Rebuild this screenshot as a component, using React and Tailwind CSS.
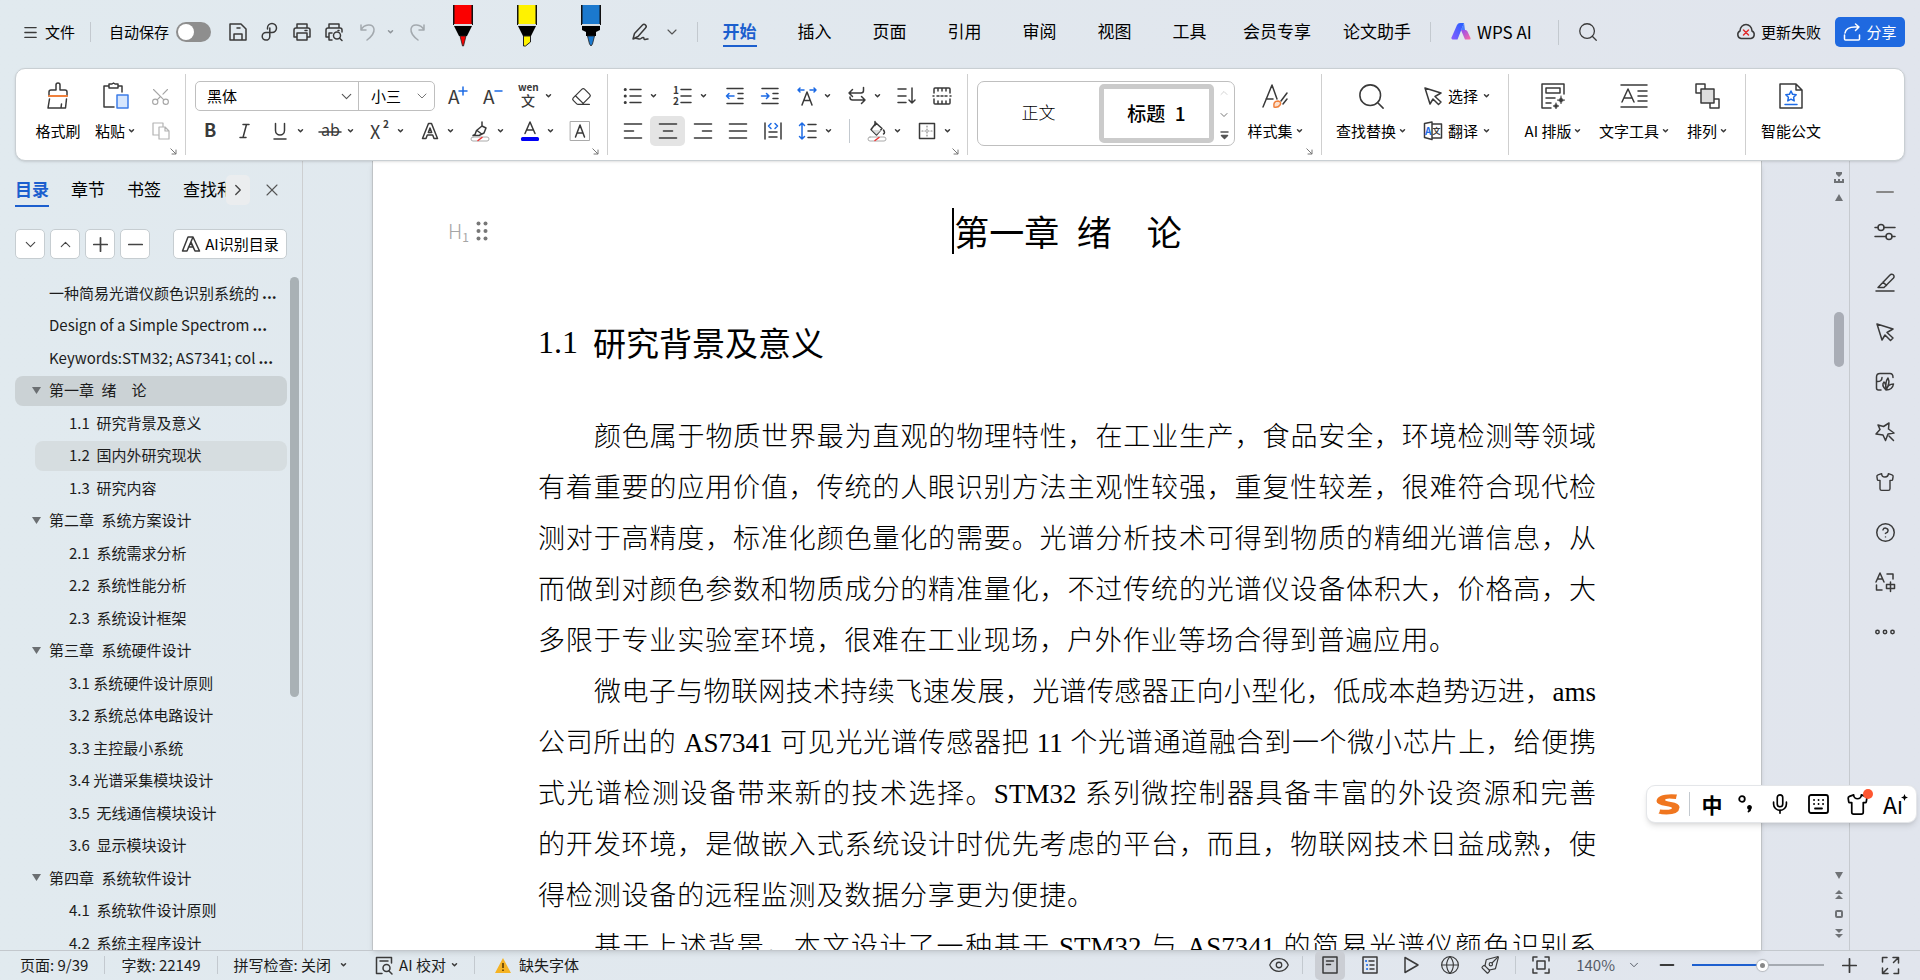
import {
  Menu, X, Plus, Minus, Search, ChevronDown, ChevronUp, ChevronRight, Eye, Globe, Play,
  Mic, Shirt, CircleHelp, Scissors, Eraser, PenTool,
} from "lucide-react";

const UI_FONT = "font-['Noto_Sans_CJK_SC','Noto_Sans',sans-serif]";

/* ---------- small helpers ---------- */

function Svg({ w = 20, h = 20, sw = 1.5, className = "text-[#3a3a3a]", children }) {
  return (
    <svg
      width={w}
      height={h}
      viewBox={`0 0 ${w} ${h}`}
      fill="none"
      stroke="currentColor"
      strokeWidth={sw}
      strokeLinecap="round"
      strokeLinejoin="round"
      className={`shrink-0 overflow-visible ${className}`}
      aria-hidden="true"
    >
      {children}
    </svg>
  );
}

const Caret = ({ className = "text-[#3a3a3a]" }) => (
  <Svg w={7} h={6} sw={1.5} className={className}>
    <path d="M1.500 1.800l2 2 2-2" />
  </Svg>
);

const Launcher = () => (
  <button aria-label="更多设置" className="absolute right-[8px] bottom-0">
    <Svg w={7} h={7} sw={1} className="text-[#777]">
      <path d="M.8.8l5 5M6 2v4H2" />
    </Svg>
  </button>
);

const Divider = ({ className = "h-5" }) => <span className={`w-px shrink-0 bg-[#c3c9cf] ${className}`} />;

/* ---------- icons ---------- */

const SaveIcon = () => (
  <Svg><path d="M2 2h11l5 5v11H2zM6 18v-6h8v6M9 6h3" /></Svg>
);
const ClipIcon = () => (
  <Svg><path d="M7.500 7V6a4.500 4.500 0 1 1 4.500 4.500H6a3.800 3.800 0 1 0 3.800 4V6" /></Svg>
);
const PrintIcon = () => (
  <Svg><path d="M5 6V2h10v4M5 15H2V8a2 2 0 0 1 2-2h12a2 2 0 0 1 2 2v7h-3M5 11h10v7H5zM13 8.500h2" /></Svg>
);
const PreviewIcon = () => (
  <Svg><path d="M5 6V2h10v4M5 15H2V8a2 2 0 0 1 2-2h12a2 2 0 0 1 2 2v2M8 18H5v-7h3" /><circle cx="13" cy="13.500" r="3.500" /><path d="M15.600 16.200l2.400 2.300M14 8.500h1" /></Svg>
);
const UndoIcon = () => (
  <Svg className="text-[#a3a9ae]"><path d="M3 3v5h5M3 8c3-6 12-7 13-1 .5 4-3 8-7 11" /></Svg>
);
const RedoIcon = () => (
  <Svg className="text-[#a3a9ae]"><path d="M17 3v5h-5M17 8C14 2 5 1 4 7c-.5 4 3 8 7 11" /></Svg>
);
const DrawPenIcon = () => (
  <Svg><path d="M3 17l1.500-5.500L12.500 3a2 2 0 0 1 3 3L8 14.500zM3 17c4-2 6 1 8-.5s3-1 3 .3 2 .7 4 .2" /></Svg>
);

function Marker({ color, tip }) {
  return (
    <svg width="20" height="42" viewBox="0 0 20 42" aria-hidden="true">
      <path d="M0 0h20v20H0z" fill="#111" />
      <path d="M1.500 0h17v19h-17z" fill={color} />
      <path d="M1 19h18v2H1z" fill="#d8dde0" />
      <path d={tip === "round" ? "M1 21h18v4l-4 2v4H5v-4l-4-2z" : "M1 21h18l-5 10H6z"} fill="#000" />
      {tip === "flat" && <path d="M6.500 31h7v6l-5 4h-2z" fill={color} stroke="#222" />}
      {tip === "fine" && <path d="M7 31h6l-2.500 10h-1z" fill={color} stroke="#222" strokeWidth=".8" />}
      {tip === "round" && <path d="M6.500 31h7l-2 8-1.500 2-1.500-2z" fill={color} stroke="#222" strokeWidth=".8" />}
    </svg>
  );
}

const WpsAiLogo = () => (
  <svg width="20" height="18" viewBox="0 0 20 18" aria-hidden="true">
    <defs>
      <linearGradient id="wa" x1="0" y1="1" x2="1" y2="0">
        <stop offset="0" stopColor="#8a5cff" />
        <stop offset="1" stopColor="#2060ff" />
      </linearGradient>
      <linearGradient id="wb" x1="0" y1="0" x2="1" y2="1">
        <stop offset="0" stopColor="#8c4cf5" />
        <stop offset="1" stopColor="#ff6aa0" />
      </linearGradient>
    </defs>
    <path d="M9 0h4L6.500 16.500H1.500q-1.500-.5-1-2L6 2Q7 0 9 0z" fill="url(#wa)" />
    <path d="M10 7h4.500q1.500 0 2 1.500l3 6.500q.5 1.500-1 1.500H14z" fill="url(#wb)" />
    <path d="M13 0l1 7h-4z" fill="#4a7dff" />
  </svg>
);

const BrushIcon = () => (
  <Svg w={26} h={28}>
    <path d="M11 8V3a2 2 0 0 1 4 0v5h5a2 2 0 0 1 2 2v4H4v-4a2 2 0 0 1 2-2zM4.500 17L3 26h17.500l1-9M16 26l.500-4" />
    <path d="M4 14h18" stroke="#f0803c" strokeWidth="2" />
  </Svg>
);
const PasteIcon = () => (
  <Svg w={27} h={28}>
    <path d="M7 4H2v21h10M16 4h4v6M7 2h3l1.500-1 1.500 1h3v4H7z" />
    <path d="M15 13h11v13H15z" fill="#d6e6fd" stroke="#3d7ce8" />
  </Svg>
);
const CopyIcon = () => (
  <Svg w={18} h={18} sw={1.2} className="text-[#b3b3b3]"><path d="M11 4V1H1v12h5M7 5h6l4 4v8H7zM13 5v4h4" /></Svg>
);

/* letter with extra strokes around it */
function LetterIcon({ letter = "A", size = 19, x = 2, y = 17, weight = 400, children }) {
  return (
    <Svg w={22} h={22}>
      <text
        x={x}
        y={y}
        fontSize={size}
        fontWeight={weight}
        fontFamily="Noto Sans CJK SC, sans-serif"
        fill="currentColor"
        stroke="none"
      >
        {letter}
      </text>
      {children}
    </Svg>
  );
}

const BulletIcon = () => (
  <Svg><path d="M7 3.500h11M7 10h11M7 16.500h11" /><path d="M2.200 3.500h.1M2.200 10h.1M2.200 16.500h.1" strokeWidth="3" /></Svg>
);
const NumberIcon = () => (
  <Svg>
    <path d="M8 3.500h10M8 10h10M8 16.500h10" />
    <text x="0" y="8" fontSize="10" fontWeight="700" fill="currentColor" stroke="none">1</text>
    <text x="0" y="19" fontSize="10" fontWeight="700" fill="currentColor" stroke="none">2</text>
  </Svg>
);
const OutdentIcon = () => (
  <Svg><path d="M2 2.500h16M13 7.500h5M13 12.500h5M2 17.500h16" /><path d="M9 10H1.500M4 7.500L1.500 10 4 12.500" stroke="#1d6be5" /></Svg>
);
const IndentIcon = () => (
  <Svg><path d="M2 2.500h16M13 7.500h5M13 12.500h5M2 17.500h16" /><path d="M1.500 10H9M6.500 7.500L9 10l-2.500 2.500" stroke="#1d6be5" /></Svg>
);
const CharScaleIcon = () => (
  <Svg>
    <path d="M1 4h6M3 2L1 4l2 2M19 4h-6M17 2l2 2-2 2" stroke="#1d6be5" />
    <path d="M5 19l5-13 5 13M7 14.500h6" />
  </Svg>
);
const WrapIcon = () => (
  <Svg><path d="M16.500 1.500v3q0 2.500-2.500 2.500H2M5.500 3.500L2 7l3.500 3.500M3 11v.5q0 2.500 2.500 2.500H18M14.500 10.500L18 14l-3.500 3.500" /></Svg>
);
const SortIcon = () => (
  <Svg><path d="M1 3h8M1 10h8M1 16.500h8M15 2v15M12 14l3 3 3-3" /></Svg>
);
const RulerIcon = () => (
  <Svg><path d="M2 7V3q0-1 1-1h14q1 0 1 1v4M2 13v4q0 1 1 1h14q1 0 1-1v-4M6 2v3M10 2v3M14 2v3M6 18v-3M10 18v-3M14 18v-3M1 10h1M5 10h2M9 10h2M13 10h2M18 10h1" /></Svg>
);
const AlignIcon = ({ mid }) => (
  <Svg sw={1.6}><path d={`M1.500 3h17M${mid}M1.500 17h17`} /></Svg>
);
const DistributeIcon = () => (
  <Svg><path d="M2 2v16M18 2v16M6 11h8M6 16h8" /><path d="M8 2.500L5.500 5 8 7.500M12 2.500L14.500 5 12 7.500" stroke="#1d6be5" /></Svg>
);
const LineSpaceIcon = () => (
  <Svg><path d="M10 3.500h8M10 10h8M10 16.500h8" /><path d="M4 2v16M1.500 4.500L4 2l2.500 2.500M1.500 15.500L4 18l2.500-2.500" stroke="#1d6be5" /></Svg>
);
const BucketIcon = () => (
  <Svg>
    <path d="M9 2l6 5.500-5.500 6.500L4 8.500zM8 .5v4M16.500 9q2 3 0 4" />
    <path d="M5 9h9l-4.500 4.500z" fill="#dcdcdc" stroke="none" />
    <rect x="1" y="16" width="18" height="4" rx="2" stroke="#aaa" strokeWidth="1" />
    <path d="M8 19.500l4-3" stroke="#e33" />
  </Svg>
);
const BorderIcon = () => (
  <Svg><path d="M2.500 2.500h15v15h-15z" /><path d="M10 5v10M5 10h10" strokeDasharray="1 2" strokeWidth="1.200" className="text-[#888]" /></Svg>
);
const StyleSetIcon = () => (
  <Svg w={28} h={26}>
    <path d="M2 24L11 2l5 14M5 16h7M26 10l-6 8M26 16l-4 5" />
    <path d="M13 24q-1-6 4-6 4 1 2 4-2 3-6 2z" stroke="#f0803c" fill="#fbe0cd" />
  </Svg>
);
const CursorIcon = () => (
  <Svg><path d="M2 2l16 5-6 3.500 6 5.500-2.500 2.500L10 13l-3 5z" /></Svg>
);
const TranslateIcon = () => (
  <Svg>
    <path d="M9 1L1.500 2.500v14L9 18.500zM9 3h9.500v14H9" />
    <text x="2" y="14" fontSize="10" fontWeight="700" fill="#1d6be5" stroke="none">A</text>
    <text x="9.500" y="13" fontSize="8" fontWeight="700" fill="currentColor" stroke="none" fontFamily="Noto Sans CJK SC">文</text>
  </Svg>
);
const AiLayoutIcon = () => (
  <Svg w={26} h={28}>
    <path d="M24 12V2H2v24h9M6 6h14v5H6zM6 16h9M6 21h5" />
    <path d="M21 14q.5 4 4 4-3.500.5-4 4-.5-3.500-4-4 3.500 0 4-4zM16 21q.5 2.500 3 3-2.500.5-3 3-.5-2.500-3-3 2.500-.5 3-3z" fill="currentColor" strokeWidth=".5" />
  </Svg>
);
const TextToolIcon = () => (
  <Svg w={28} h={26}><path d="M1 2h26M1 24h26M18 8h9M18 13h9M18 18h9M2 19L8 6l6 13M4.500 15h7" /></Svg>
);
const ArrangeIcon = () => (
  <Svg w={26} h={26}><path d="M2 1h9v9H2zM16 16h9v9h-9z" /><path d="M7 6h13v14H7z" fill="#dedede" /></Svg>
);
const SmartDocIcon = () => (
  <Svg w={26} h={28}>
    <path d="M2 2h16l6 6v18H2zM18 2v6h6" />
    <path d="M13 9l1.600 3.300 3.600.5-2.600 2.500.6 3.600-3.200-1.700-3.200 1.700.6-3.600-2.600-2.500 3.600-.5zM7 22.500h12" stroke="#1d6be5" />
  </Svg>
);
const AiTocIcon = () => (
  <Svg w={20} h={18}><path d="M7 2h5l-6 14H1.500zM12 2l6.500 14H14l-4-8M7.500 12h4M10 7l4 9" /></Svg>
);

/* ---------- top bar ---------- */

const TABS = ["开始", "插入", "页面", "引用", "审阅", "视图", "工具", "会员专享", "论文助手"];

function IconButton({ label, className = "", children }) {
  return (
    <button aria-label={label} className={`flex shrink-0 items-center justify-center ${className}`}>
      {children}
    </button>
  );
}

function TopBar() {
  return (
    <header className="flex h-[68px] shrink-0 items-start justify-between pr-[15px] pl-[22px]">
      <div className="flex h-[64px] items-center">
        <button className="flex items-center gap-[6px] text-[15px]">
          <Menu size={17} strokeWidth={1.8} className="text-[#3a3a3a]" />文件
        </button>
        <Divider className="ml-[15px] h-5" />
        <label className="ml-[18px] flex items-center gap-[7px] text-[15px]">
          自动保存
          <input
            type="checkbox"
            className="flex h-5 w-[35px] appearance-none items-center rounded-full bg-[#8e8e8e] px-[2px] before:size-4 before:rounded-full before:bg-white"
          />
        </label>
        <div className="ml-[11px] flex items-center">
          <IconButton label="保存" className="w-8"><SaveIcon /></IconButton>
          <IconButton label="输出" className="w-8"><ClipIcon /></IconButton>
          <IconButton label="打印" className="w-8"><PrintIcon /></IconButton>
          <IconButton label="打印预览" className="w-8"><PreviewIcon /></IconButton>
          <IconButton label="撤销" className="ml-[2px] w-8"><UndoIcon /></IconButton>
          <IconButton label="撤销记录" className="w-3"><Caret className="text-[#8e9499]" /></IconButton>
          <IconButton label="恢复" className="ml-px w-10"><RedoIcon /></IconButton>
        </div>
        <div className="ml-4 flex items-center gap-11 pb-3">
          <IconButton label="红色笔"><Marker color="#fb0000" tip="fine" /></IconButton>
          <IconButton label="黄色荧光笔"><Marker color="#fff200" tip="flat" /></IconButton>
          <IconButton label="蓝色笔"><Marker color="#1b79ce" tip="round" /></IconButton>
        </div>
        <IconButton label="画笔" className="ml-[29px]"><DrawPenIcon /></IconButton>
        <IconButton label="更多画笔" className="ml-[14px]"><ChevronDown size={16} strokeWidth={1.7} className="text-[#555]" /></IconButton>
        <Divider className="ml-[17px] h-5" />
        <nav className="ml-1 flex items-center text-[17px]">
          {TABS.map((tab, i) => (
            <a
              key={tab}
              href="#"
              className={`flex flex-col items-center leading-[28px] ${tab.length > 2 ? "w-[100px]" : "w-[75px]"} ${i === 0 ? "font-bold text-[#1c5fce]" : ""}`}
            >
              <span className={`border-b-2 ${i === 0 ? "border-[#1c5fce]" : "border-transparent"}`}>{tab}</span>
            </a>
          ))}
        </nav>
        <Divider className="ml-[3px] h-5" />
        <button className="ml-[20px] flex items-center gap-[6px] text-[17px]"><WpsAiLogo />WPS AI</button>
        <Divider className="ml-[26px] h-[25px]" />
        <IconButton label="搜索" className="ml-[18px]"><Search size={22} strokeWidth={1.4} className="text-[#3a3a3a]" /></IconButton>
      </div>
      <div className="flex h-[64px] items-center gap-[14px] text-[15px]">
        <button className="flex items-center gap-[5px]">
          <Svg><path d="M5 16.500a4 4 0 0 1-1-7.500C4 5 7 2.500 10 2.500S16 5 16 9a4 4 0 0 1-1 7.500z" /><path d="M7.500 8l5 5M12.500 8l-5 5" stroke="#e02c2c" /></Svg>
          更新失败
        </button>
        <button className="flex h-[30px] w-[70px] items-center justify-center gap-[5px] rounded-[5px] bg-[#1f69e0] text-white">
          <Svg w={18} h={18} className="text-white"><path d="M2 10q1-6 10-6h4M12.500 1L16 4l-3.500 3.500M1.500 12v4q0 1 1 1h13q1 0 1-1v-4" /></Svg>
          分享
        </button>
      </div>
    </header>
  );
}

/* ---------- ribbon ---------- */

function Tool({ label, menu, active, className = "", children }) {
  return (
    <button aria-label={label} title={label} className={`flex h-[30px] shrink-0 items-center ${menu ? "w-[50px]" : "w-[35px]"} ${className}`}>
      <span className={`flex h-[30px] w-[35px] items-center justify-center ${active ? "rounded-[5px] bg-[#e4e4e4]" : ""}`}>{children}</span>
      {menu && <Caret />}
    </button>
  );
}

function BigTool({ label, menu, className, children }) {
  return (
    <button className={`flex shrink-0 flex-col items-center gap-[5px] text-[15px] ${className}`}>
      <span className="flex h-[30px] items-center">{children}</span>
      <span className="flex h-[30px] items-center gap-[3px] whitespace-nowrap">{label}{menu && <Caret />}</span>
    </button>
  );
}

function Group({ last, className = "", children }) {
  return <section className={`relative flex shrink-0 pt-[7px] ${last ? "" : "border-r border-[#cfcfcf]"} ${className}`}>{children}</section>;
}

function Ribbon() {
  return (
    <div className="relative z-10 mx-[15px] flex h-[93px] shrink-0 overflow-hidden rounded-[10px] border border-[#c9cfd3] bg-white py-[5px] pl-[13px] shadow-sm">
      <Group className="w-[157px]">
        <BigTool label="格式刷" className="w-[58px]"><BrushIcon /></BigTool>
        <BigTool label="粘贴" menu className="w-[56px]"><PasteIcon /></BigTool>
        <div className="flex flex-col gap-[5px]">
          <Tool label="剪切"><Scissors size={21} strokeWidth={1.3} className="-rotate-90 text-[#a6a6a6]" /></Tool>
          <Tool label="复制"><CopyIcon /></Tool>
        </div>
        <Launcher />
      </Group>

      <Group className="w-[422px] flex-col gap-[5px] pl-[6px]">
        <div className="flex pl-[3px]">
          <div className="mr-[5px] flex h-[30px] w-[240px] rounded-[5px] border border-[#bfbfbf] text-[15px]">
            <div className="relative w-[163px] border-r border-[#bfbfbf]">
              <select aria-label="字体" className="h-full w-full appearance-none pl-[11px]"><option>黑体</option></select>
              <ChevronDown size={17} strokeWidth={1.6} className="pointer-events-none absolute top-[6px] right-[3px] text-[#555]" />
            </div>
            <div className="relative flex-1">
              <select aria-label="字号" className="h-full w-full appearance-none pl-[12px]"><option>小三</option></select>
              <ChevronDown size={16} strokeWidth={1.5} className="pointer-events-none absolute top-[6px] right-[4px] text-[#777]" />
            </div>
          </div>
          <Tool label="增大字号"><LetterIcon x={1} y={19}><path d="M16 2v8M12 6h8" stroke="#1d6be5" /></LetterIcon></Tool>
          <Tool label="减小字号"><LetterIcon x={1} y={19}><path d="M13 6h7" stroke="#1d6be5" /></LetterIcon></Tool>
          <Tool label="拼音指南" menu>
            <Svg w={22} h={26}>
              <text x="1" y="8" fontSize="10" fontWeight="700" fill="currentColor" stroke="none">wen</text>
              <text x="4" y="23" fontSize="14" fontWeight="500" fill="currentColor" stroke="none" fontFamily="Noto Sans CJK SC">文</text>
            </Svg>
          </Tool>
          <Tool label="清除格式" className="ml-1"><Eraser size={21} strokeWidth={1.4} className="text-[#3a3a3a]" /></Tool>
        </div>
        <div className="flex">
          <Tool label="加粗"><LetterIcon letter="B" x={5} y={17} size={18} weight={700} /></Tool>
          <Tool label="倾斜"><Svg><path d="M8 3.500h6M5 16.500h6M11.500 3.500l-3.500 13" /></Svg></Tool>
          <Tool label="下划线" menu><Svg><path d="M5.500 2.500v7a4.500 4.500 0 0 0 9 0v-7M4 18h12" /></Svg></Tool>
          <Tool label="删除线" menu><LetterIcon letter="ab" x={2} y={16} size={16}><path d="M0 12h22" /></LetterIcon></Tool>
          <Tool label="上标" menu><LetterIcon letter="X" x={1} y={19} size={18}><text x="14" y="8" fontSize="10" fontWeight="700" fill="currentColor" stroke="none">2</text></LetterIcon></Tool>
          <Tool label="文字效果" menu><Svg><path d="M8.500 2.500h3l6 15h-3.500l-1.300-3.500H7.300L6 17.500H2.500zM10 7l-1.700 4.500h3.400z" /></Svg></Tool>
          <Tool label="突出显示" menu>
            <Svg><path d="M12 1v4l4 2M12 5L6.500 9.500 5 13.500 3 14.500h6l5-2.500 2-5M7 9.500l4 3" /><rect x="1" y="16" width="18" height="4" rx="2" stroke="#aaa" strokeWidth="1" /><path d="M8 19.500l4-3" stroke="#e33" /></Svg>
          </Tool>
          <Tool label="字体颜色" menu>
            <Svg><path d="M5 12.500l5-11.500 5 11.500M7 9h6" /><rect x="1" y="16" width="18" height="4" rx="1.500" fill="#0000f5" stroke="none" /></Svg>
          </Tool>
          <Tool label="字符底纹" className="w-10!">
            <Svg><rect x=".5" y=".5" width="19" height="19" stroke="#aaa" strokeWidth="1" /><path d="M5.500 16L10 4l4.500 12M7.500 12h5" /></Svg>
          </Tool>
        </div>
        <Launcher />
      </Group>

      <Group className="w-[360px] flex-col gap-[5px] pl-[7px]">
        <div className="flex gap-[2px]">
          <div className="flex">
            <Tool label="项目符号" menu><BulletIcon /></Tool>
            <Tool label="编号" menu><NumberIcon /></Tool>
          </div>
          <div className="flex">
            <Tool label="减少缩进"><OutdentIcon /></Tool>
            <Tool label="增加缩进"><IndentIcon /></Tool>
          </div>
          <div className="flex">
            <Tool label="中文版式" menu><CharScaleIcon /></Tool>
            <Tool label="换行" menu><WrapIcon /></Tool>
            <Tool label="排序"><SortIcon /></Tool>
            <Tool label="制表位"><RulerIcon /></Tool>
          </div>
        </div>
        <div className="flex items-center">
          <Tool label="左对齐"><AlignIcon mid="1.5 10h9" /></Tool>
          <Tool label="居中" active><AlignIcon mid="5.5 10h9" /></Tool>
          <Tool label="右对齐"><AlignIcon mid="9.5 10h9" /></Tool>
          <Tool label="两端对齐"><AlignIcon mid="1.5 10h17" /></Tool>
          <Tool label="分散对齐"><DistributeIcon /></Tool>
          <Tool label="行距" menu><LineSpaceIcon /></Tool>
          <Divider className="mx-[9px] h-6" />
          <Tool label="底纹颜色" menu><BucketIcon /></Tool>
          <Tool label="边框" menu><BorderIcon /></Tool>
        </div>
        <Launcher />
      </Group>

      <Group className="w-[354px] pl-[9px]">
        <div className="flex h-[65px] w-[258px] items-center rounded-[7px] border border-[#bfbfbf]">
          <button className="w-[121px] font-['Liberation_Serif','Noto_Sans_CJK_SC',serif] text-[17px] font-light">正文</button>
          <button className="h-[59px] w-[115px] rounded-[5px] border-[5px] border-[#cbcbcb] text-[19px] font-medium whitespace-pre">标题&ensp;1</button>
          <div className="flex flex-1 flex-col items-center gap-[10px]">
            <ChevronUp size={12} strokeWidth={1.5} className="text-[#c4c4c4]" />
            <ChevronDown size={12} strokeWidth={1.8} className="text-[#666]" />
            <Svg w={9} h={9} className="text-[#555]"><path d="M1 1h7M1.500 4.500h6l-3 3z" fill="currentColor" /></Svg>
          </div>
        </div>
        <BigTool label="样式集" menu className="ml-[4px] w-[72px]"><StyleSetIcon /></BigTool>
        <Launcher />
      </Group>

      <Group className="w-[187px] pl-[9px]">
        <BigTool label="查找替换" menu className="w-[80px]"><Search size={31} strokeWidth={1.2} className="text-[#3a3a3a]" /></BigTool>
        <div className="ml-[12px] flex flex-col gap-[5px] text-[15px]">
          <button className="flex h-[30px] items-center gap-[5px]"><CursorIcon />选择<Caret /></button>
          <button className="flex h-[30px] items-center gap-[5px]"><TranslateIcon />翻译<Caret /></button>
        </div>
      </Group>

      <Group className="w-[237px] pl-[7px]">
        <BigTool label="AI 排版" menu className="w-[74px]"><AiLayoutIcon /></BigTool>
        <BigTool label="文字工具" menu className="w-[88px]"><TextToolIcon /></BigTool>
        <BigTool label="排列" menu className="w-[58px]"><ArrangeIcon /></BigTool>
      </Group>

      <Group last className="pl-[5px]">
        <BigTool label="智能公文" className="w-[80px]"><SmartDocIcon /></BigTool>
      </Group>
    </div>
  );
}

/* ---------- outline panel ---------- */

const OUTLINE = [
  { text: "一种简易光谱仪颜色识别系统的", more: true },
  { text: "Design of a Simple Spectrom", more: true },
  { text: "Keywords:STM32; AS7341; col", more: true },
  { text: "第一章\u2002绪\u3000论", open: true, current: true },
  { text: "1.1  研究背景及意义", sub: true },
  { text: "1.2  国内外研究现状", sub: true, hover: true },
  { text: "1.3  研究内容", sub: true },
  { text: "第二章\u2002系统方案设计", open: true },
  { text: "2.1  系统需求分析", sub: true },
  { text: "2.2  系统性能分析", sub: true },
  { text: "2.3  系统设计框架", sub: true },
  { text: "第三章\u2002系统硬件设计", open: true },
  { text: "3.1 系统硬件设计原则", sub: true },
  { text: "3.2 系统总体电路设计", sub: true },
  { text: "3.3 主控最小系统", sub: true },
  { text: "3.4 光谱采集模块设计", sub: true },
  { text: "3.5  无线通信模块设计", sub: true },
  { text: "3.6  显示模块设计", sub: true },
  { text: "第四章\u2002系统软件设计", open: true },
  { text: "4.1  系统软件设计原则", sub: true },
  { text: "4.2  系统主程序设计", sub: true },
];

function OutlineRow({ item }) {
  return (
    <li className={`flex items-center ${item.sub ? "pl-5" : ""}`}>
      <a
        href="#"
        className={`flex h-[30px] w-full items-center rounded-[8px] whitespace-pre ${item.sub ? "pl-[34px]" : ""} ${item.current ? "bg-[#cbd2d5]" : ""} ${item.hover ? "bg-[#d6dde0]" : ""}`}
      >
        {!item.sub && (
          <span className="flex w-[34px] justify-center pl-[9px]">
            {item.open && <svg width="9" height="7" viewBox="0 0 9 7"><path d="M0 0h9L4.500 7z" fill="#6b6f72" /></svg>}
          </span>
        )}
        {item.text}
        {item.more && <b className="ml-[3px]">...</b>}
      </a>
    </li>
  );
}

function OutlinePanel() {
  const square = "flex size-[30px] items-center justify-center rounded-[5px] border border-[#c6cdd1] bg-white text-[#444]";
  return (
    <aside className="flex w-[303px] shrink-0 flex-col overflow-hidden border-r border-[#cdcfd1] pl-[15px]">
      <div className="mt-[12px] flex h-[34px] items-center text-[17px]">
        <div className="flex w-[211px] gap-[22px] overflow-hidden whitespace-nowrap">
          {["目录", "章节", "书签", "查找和替换"].map((t, i) => (
            <a key={t} href="#" className={`border-b-2 leading-[32px] ${i === 0 ? "border-[#1c5fce] font-bold text-[#1c5fce]" : "border-transparent"}`}>{t}</a>
          ))}
        </div>
        <button aria-label="更多标签" className="flex h-[30px] w-6 items-center justify-center rounded-[5px] bg-[#ebedef]">
          <ChevronRight size={18} strokeWidth={1.8} className="text-[#444]" />
        </button>
        <button aria-label="关闭" className="ml-3"><X size={20} strokeWidth={1.3} className="text-[#555]" /></button>
      </div>
      <div className="mt-[22px] flex gap-[5px]">
        <button aria-label="全部折叠" className={square}><ChevronDown size={17} strokeWidth={1.5} /></button>
        <button aria-label="全部展开" className={square}><ChevronUp size={17} strokeWidth={1.5} /></button>
        <button aria-label="放大级别" className={square}><Plus size={23} strokeWidth={1.8} /></button>
        <button aria-label="缩小级别" className={square}><Minus size={23} strokeWidth={1.8} /></button>
        <button className="ml-[18px] flex h-[30px] w-[114px] items-center justify-center gap-[4px] rounded-[5px] border border-[#c6cdd1] bg-white text-[15px]">
          <AiTocIcon />AI识别目录
        </button>
      </div>
      <div className="mt-[18px] flex items-start gap-[3px]">
        <ul className="grid h-[682px] w-[272px] auto-rows-fr text-[15px] text-[#1c1c1c]">
          {OUTLINE.map((item) => <OutlineRow key={item.text} item={item} />)}
        </ul>
        <div className="h-[420px] w-[9px] rounded-full bg-[#a9b1b5]" />
      </div>
    </aside>
  );
}

/* ---------- document ---------- */

/* typeset lines; "end" is the space left after a paragraph's last line */
const LINES = [
  { text: "颜色属于物质世界最为直观的物理特性，在工业生产，食品安全，环境检测等领域", first: true },
  { text: "有着重要的应用价值，传统的人眼识别方法主观性较强，重复性较差，很难符合现代检" },
  { text: "测对于高精度，标准化颜色量化的需要。光谱分析技术可得到物质的精细光谱信息，从" },
  { text: "而做到对颜色参数和物质成分的精准量化，不过传统的光谱仪设备体积大，价格高，大" },
  { text: "多限于专业实验室环境，很难在工业现场，户外作业等场合得到普遍应用。", end: "pr-[140px]" },
  { text: "微电子与物联网技术持续飞速发展，光谱传感器正向小型化，低成本趋势迈进，ams", first: true },
  { text: "公司所出的 AS7341 可见光光谱传感器把 11 个光谱通道融合到一个微小芯片上，给便携" },
  { text: "式光谱检测设备带来新的技术选择。STM32 系列微控制器具备丰富的外设资源和完善" },
  { text: "的开发环境，是做嵌入式系统设计时优先考虑的平台，而且，物联网技术日益成熟，使" },
  { text: "得检测设备的远程监测及数据分享更为便捷。", end: "pr-[502px]" },
  { text: "基于上述背景，本文设计了一种基于 STM32 与 AS7341 的简易光谱仪颜色识别系", first: true },
];

function DocumentPage() {
  return (
    <article className="ml-[69px] flex-1 overflow-hidden border-x border-[#bfc3c6] bg-white px-[165px] text-black shadow-md">
      <div className="relative mt-[44px] flex h-[52px] items-center justify-center">
        <div className="absolute -left-[90px] flex items-center gap-[7px] text-[#a5a5a5]">
          <span className="text-[20px] font-light">H<sub className="text-[12px] font-normal">1</sub></span>
          <svg width="12" height="20" viewBox="0 0 12 20" fill="#777">
            {[2.5, 10, 17.5].map((y) => [2.5, 9.5].map((x) => <circle key={`${x}-${y}`} cx={x} cy={y} r="2" />))}
          </svg>
        </div>
        <span className="h-[46px] w-[2px] bg-black" />
        <h1 className="text-[35px] leading-[48px] font-normal">第一章&ensp;绪　论</h1>
      </div>
      <h2 className="mt-[59px] flex items-center gap-[15px] text-[33px] leading-[52px] font-normal">
        <span className="font-['Liberation_Serif',serif] text-[32px]">1.1</span>研究背景及意义
      </h2>
      <div className="mt-[44px] font-['Liberation_Serif','Noto_Sans_CJK_SC',serif] text-[27px] leading-[51px] font-light">
        {LINES.map((line) => (
          <p
            key={line.text}
            className={`whitespace-nowrap text-justify [text-align-last:justify] ${line.first ? "pl-14" : ""} ${line.end || ""}`}
          >
            {line.text}
          </p>
        ))}
      </div>
    </article>
  );
}

function ScrollColumn() {
  return (
    <div className="ml-[66px] flex w-[22px] shrink-0 flex-col items-center border-r border-[#c6cacf] pt-[11px] pb-[12px] text-[#6f7276]">
      <svg width="10" height="11" viewBox="0 0 10 11" fill="currentColor"><path d="M2 0h6v2L5 5 2 2zM0 7h2v2h2V7h2v2h2V7h2v4H0z" /></svg>
      <svg width="8" height="7" viewBox="0 0 8 7" fill="currentColor" className="mt-[11px]"><path d="M4 0l4 7H0z" /></svg>
      <div className="mt-[111px] h-[55px] w-[10px] rounded-full bg-[#a9adb6]" />
      <div className="mt-auto flex flex-col items-center gap-[11px]">
        <svg width="8" height="7" viewBox="0 0 8 7" fill="currentColor"><path d="M0 0h8L4 7z" /></svg>
        <svg width="8" height="9" viewBox="0 0 8 9" fill="currentColor"><path d="M4 0l4 4H0zM4 5l4 4H0z" /></svg>
        <svg width="8" height="8" viewBox="0 0 8 8" fill="none" stroke="currentColor" strokeWidth="2"><rect x="1" y="1" width="6" height="6" rx="1" /></svg>
        <svg width="8" height="9" viewBox="0 0 8 9" fill="currentColor"><path d="M0 0h8L4 4zM0 5h8L4 9z" /></svg>
      </div>
    </div>
  );
}

function SideTools() {
  const tools = [
    ["属性", <Svg key="b"><path d="M0 5.500h3M9 5.500h11M0 14.500h11M17 14.500h3" /><circle cx="6" cy="5.500" r="3" /><circle cx="14" cy="14.500" r="3" /></Svg>],
    ["批注", <Svg key="c"><path d="M1 19h18M3 15.500L15 3a2.300 2.300 0 0 1 3.500 3L9 15.500zM8 10l3.500 3.500" /></Svg>],
    ["选择", <CursorIcon key="d" />],
    ["图片", <Svg key="e"><path d="M18 5.500q0-4-3-4H5Q1.500 1.500 1.500 5v11q0 2 2 2H6M1.500 9.500q5.500.5 5.500-4M11 18q-5-5-2-8 2.500 2.500 2 8zM11 18q-1-8 2-12 2.500 5-2 12zM11 18q2-6 7.500-6-1 6-7.500 6z" /></Svg>],
    ["收藏", <Svg key="f"><path d="M3 3l5.500 1.500L14 1l-.5 6 5.500 4-6 1-2.500 6.500L8 13l-7-1 4-4.500zM14 14l4.500 4.500" /></Svg>],
    ["皮肤", <Shirt key="g" size={20} strokeWidth={1.7} className="text-[#3a3a3a]" />],
    ["帮助", <CircleHelp key="h" size={21} strokeWidth={1.7} className="text-[#3a3a3a]" />],
    ["翻译", <Svg key="i"><path d="M1 10L5 1l4 9M2.500 7h5M12 2h6v5M1.500 13v5H7M11.500 12.500h8v4h-8zM15.500 10v9.500" /></Svg>],
    ["更多", <Svg key="j"><circle cx="2.500" cy="10" r="1.700" /><circle cx="10" cy="10" r="1.700" /><circle cx="17.500" cy="10" r="1.700" /></Svg>],
  ];
  return (
    <aside className="flex w-[70px] shrink-0 flex-col items-center pt-4">
      <IconButton label="收起" className="h-[30px] w-[50px]"><Svg className="text-[#888]" sw={2}><path d="M2 10h16" /></Svg></IconButton>
      {tools.map(([label, icon]) => (
        <IconButton key={label} label={label} className="size-[50px]">{icon}</IconButton>
      ))}
    </aside>
  );
}

function InputMethodBar() {
  return (
    <div className="absolute right-[3px] bottom-[157px] z-20 flex h-[38px] w-[271px] items-center rounded-[9px] border border-[#e4e6e9] bg-white pl-[9px] text-black shadow-md">
      <svg width="24" height="21" viewBox="0 0 24 21" aria-label="搜狗">
        <path
          d="M21 .5q-1 3-1 4.500Q9 3.500 9 6q0 1 6 2 9 1.500 8.500 5.500-.5 7-13 7-5 0-8-1 1.500-2 1.500-4 12 1 12-1.500 0-1-6-2Q.5 10.500.5 7 1.500-1 21 .5z"
          fill="#f0761f"
        />
      </svg>
      <Divider className="mr-[4px] ml-[9px] h-6" />
      <button className="w-[36px] text-center text-[21px] leading-6 font-bold">中</button>
      <IconButton label="标点" className="w-[32px]"><Svg w={16} sw={1.8} className="text-black"><circle cx="4" cy="5" r="2.800" /><path d="M10.500 14.500a1.500 1.500 0 1 1 2 0q0 2-2 3" fill="currentColor" /></Svg></IconButton>
      <IconButton label="语音" className="w-[36px]"><Mic size={22} strokeWidth={1.8} /></IconButton>
      <IconButton label="键盘" className="w-[40px]">
        <Svg w={21} h={20} sw={1.8} className="text-black"><rect x="1" y="1" width="19" height="18" rx="2" /><path d="M6 6h.1M10.500 6h.1M15 6h.1M6 10h.1M10.500 10h.1M15 10h.1M7 14.500h7" /></Svg>
      </IconButton>
      <button aria-label="皮肤" className="relative flex w-[38px] justify-center">
        <Shirt size={23} strokeWidth={1.8} />
        <span className="absolute -top-[4px] right-[3px] size-[10px] rounded-full bg-[#ff5630]" />
      </button>
      <button aria-label="AI 助手" className="relative flex w-[34px] justify-center text-[23px] leading-6">
        Aı
        <svg width="7" height="7" viewBox="0 0 7 7" className="absolute top-[2px] right-[2px]"><path d="M3.500 0l1 2.500 2.500 1-2.500 1-1 2.500-1-2.500-2.500-1 2.500-1z" /></svg>
      </button>
    </div>
  );
}

/* ---------- status bar ---------- */

function StatusBar() {
  return (
    <footer className="flex h-[30px] shrink-0 items-center justify-between border-t border-[#c3c8cd] pr-[20px] pb-px pl-[20px] text-[15px] text-[#1c1c1c]">
      <div className="flex h-full items-center gap-4">
        <span>页面: 9/39</span>
        <Divider className="h-[18px]" />
        <span>字数: 22149</span>
        <Divider className="h-[18px]" />
        <button className="flex items-center gap-[9px]">拼写检查: 关闭<Caret /></button>
        <button className="ml-[12px] flex items-center gap-[5px]">
          <Svg w={19} h={19}><path d="M16.500 7V1.500h-15v16H7M5 5h8" /><circle cx="11.500" cy="12" r="3.500" /><path d="M14 15l3 3" /></Svg>
          AI 校对<Caret />
        </button>
        <Divider className="h-[18px]" />
        <button className="ml-[4px] flex items-center gap-[8px]">
          <svg width="16" height="15" viewBox="0 0 16 15"><path d="M8 0l8 15H0z" fill="#f5b324" /><path d="M8 5v5M8 11.500v1.500" stroke="#5a3a00" strokeWidth="1.600" /></svg>
          缺失字体
        </button>
      </div>
      <div className="flex h-full items-center text-[#3a3a3a]">
        <IconButton label="护眼模式"><Eye size={22} strokeWidth={1.4} /></IconButton>
        <Divider className="mx-[12px] h-[18px]" />
        <div className="flex">
          <IconButton label="页面视图" className="h-[29px] w-[30px] rounded-[5px] bg-[#cbced4]"><Svg w={16} h={18}><path d="M1 1h14v16H1zM4.500 5h7M4.500 8.500h4" /></Svg></IconButton>
          <IconButton label="大纲视图" className="h-[29px] w-[50px]"><Svg w={16} h={18}><path d="M1 1h14v16H1zM7 5h5M8 9h4M8 13h4" /><path d="M4 5h.1M5 9h.1M5 13h.1" stroke="#1d6be5" strokeWidth="2" /></Svg></IconButton>
          <IconButton label="阅读视图" className="h-[29px] w-[32px]"><Svg w={16} h={18}><path d="M2 1.500L15 9 2 16.500z" /></Svg></IconButton>
          <IconButton label="网页视图" className="h-[29px] w-[46px]"><Globe size={20} strokeWidth={1.4} /></IconButton>
          <IconButton label="写作模式" className="h-[29px] w-[34px]"><PenTool size={20} strokeWidth={1.4} className="-scale-x-100" /></IconButton>
        </div>
        <Divider className="mr-[16px] ml-[8px] h-[18px]" />
        <IconButton label="适合页面"><Svg w={18} h={18}><path d="M1 5V1h4M13 1h4v4M17 13v4h-4M5 17H1v-4M5 5h8v8H5z" /></Svg></IconButton>
        <button className="ml-[26px] flex items-center gap-[12px] text-[#565c66]">140%<ChevronDown size={14} strokeWidth={1.7} /></button>
        <IconButton label="缩小" className="ml-[15px]"><Minus size={22} strokeWidth={2} /></IconButton>
        <input
          type="range"
          aria-label="显示比例"
          min="0"
          max="100"
          defaultValue="54"
          className="mx-[14px] h-[2px] w-[132px] appearance-none bg-[linear-gradient(90deg,#1d5fcf_54%,#a5aab1_54%)] [&::-webkit-slider-thumb]:size-[11px] [&::-webkit-slider-thumb]:appearance-none [&::-webkit-slider-thumb]:rounded-full [&::-webkit-slider-thumb]:border-[3px] [&::-webkit-slider-thumb]:border-white [&::-webkit-slider-thumb]:bg-[#888] [&::-webkit-slider-thumb]:shadow-[0_0_1px_1px_#b5b8bd]"
        />
        <IconButton label="放大"><Plus size={23} strokeWidth={1.8} /></IconButton>
        <IconButton label="全屏" className="ml-[20px]"><Svg w={19} h={19}><path d="M1.500 6V1.500H6M12 1.500h5.500V7M17.500 1.500l-5 5M1.500 12v5.500H7M1.500 17.500l5-5M17.500 13v4.500H13" /></Svg></IconButton>
      </div>
    </footer>
  );
}

export default function App() {
  return (
    <div className={`relative flex h-screen flex-col overflow-hidden bg-linear-to-r from-[#e1eaef] to-[#e1e5ed] text-black ${UI_FONT}`}>
      <TopBar />
      <Ribbon />
      <main className="flex min-h-0 flex-1">
        <OutlinePanel />
        <DocumentPage />
        <ScrollColumn />
        <SideTools />
      </main>
      <StatusBar />
      <InputMethodBar />
    </div>
  );
}
